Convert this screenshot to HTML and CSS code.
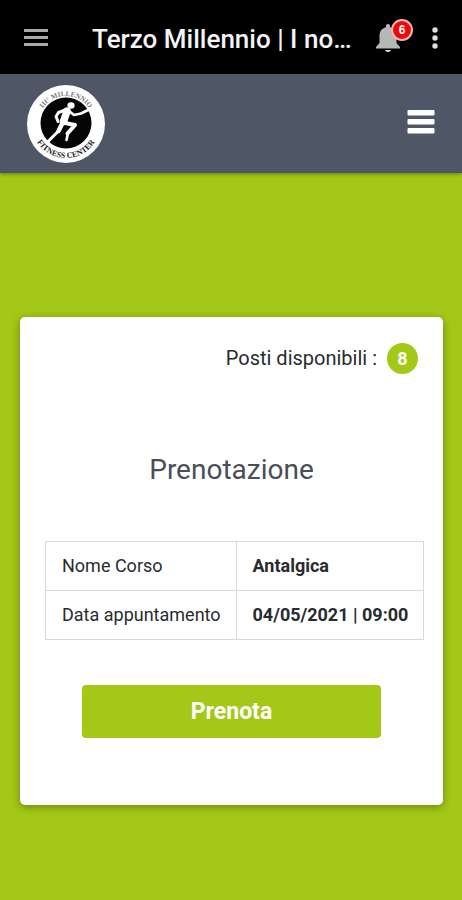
FILE: index.html
```html
<!DOCTYPE html>
<html lang="it">
<head>
<meta charset="utf-8">
<meta name="viewport" content="width=device-width, initial-scale=1">
<title>Terzo Millennio</title>
<link rel="stylesheet" href="styles.css">
</head>
<body>
<header class="appbar">
  <button class="icon-button" type="button" aria-label="Menu">
    <svg width="24" height="18" viewBox="0 0 24 18" fill="#aaa"><path d="M0 0h24v3H0zM0 7h24v3H0zM0 14h24v3H0z"/></svg>
  </button>
  <h1 class="appbar-title">Terzo Millennio | I no…</h1>
  <button class="icon-button bell" type="button" aria-label="Notifiche">
    <svg width="24" height="28" viewBox="0 0 24 28" fill="#b5b8b8"><path d="M12 0c1.300 0 2 .9 2 2v1.200c4.200 1 6.500 4.400 6.500 8.800v7L24 23v1.500H0V23l3.500-4v-7c0-4.400 2.300-7.800 6.500-8.800V2c0-1.100.7-2 2-2z"/><path d="M9 26h6c-.4 1.300-1.500 2-3 2s-2.600-.7-3-2z" fill="#ddd"/></svg>
    <span class="bell-count">6</span>
  </button>
  <button class="icon-button" type="button" aria-label="Altro">
    <svg width="6" height="22" viewBox="0 0 6 22" fill="#ddd"><circle cx="3" cy="3" r="2.700"/><circle cx="3" cy="11" r="2.700"/><circle cx="3" cy="19" r="2.700"/></svg>
  </button>
</header>
<nav class="navbar">
  <a class="brand" href="#" aria-label="III° Millennio Fitness Center">
    <svg width="78" height="78" viewBox="0 0 78 78">
      <defs>
        <path id="arc-top" d="M11 39a28 28 0 0 1 56 0"/>
        <path id="arc-bottom" d="M5 39a34 34 0 0 0 68 0"/>
      </defs>
      <circle cx="39" cy="39" r="39" fill="#fff"/>
      <circle cx="39" cy="38" r="25.500" fill="#050505"/>
      <text class="logo-top"><textPath href="#arc-top" startOffset="50%" text-anchor="middle">III° MILLENNIO</textPath></text>
      <text class="logo-bottom"><textPath href="#arc-bottom" startOffset="50%" text-anchor="middle">FITNESS CENTER</textPath></text>
      <g fill="none" stroke="#fff" stroke-linecap="round" stroke-linejoin="round">
        <path d="M38 25l-6.500 2.500-2.500 4 2 5" stroke-width="3"/>
        <path d="M42 26l5 4 7-1.500 9-4.500" stroke-width="2.800"/>
        <path d="M40 26l-3.500 10.500" stroke-width="7.500"/>
        <path d="M38 38l10 2-7.500 8.500" stroke-width="4"/>
        <path d="M41 48l-1.500 7" stroke-width="2.600"/>
        <path d="M35.500 38l-4 8" stroke-width="4.500"/>
        <path d="M31.500 46l-9.500 9.500-1.500 2" stroke-width="3"/>
      </g>
      <ellipse cx="44" cy="20.500" rx="3.600" ry="3.200" fill="#fff"/>
    </svg>
  </a>
  <button class="icon-button" type="button" aria-label="Apri navigazione">
    <svg width="28" height="24" viewBox="0 0 28 24" fill="#fff"><rect x=".5" width="27" height="5.500" rx="1"/><rect x=".5" y="9" width="27" height="5.500" rx="1"/><rect x=".5" y="18" width="27" height="5.500" rx="1"/></svg>
  </button>
</nav>
<main class="page">
  <section class="card">
    <p class="seats">Posti disponibili : <span class="seats-count">8</span></p>
    <h2 class="card-title">Prenotazione</h2>
    <table class="details">
      <tr><th scope="row">Nome Corso</th><td>Antalgica</td></tr>
      <tr><th scope="row">Data appuntamento</th><td>04/05/2021 | 09:00</td></tr>
    </table>
    <button class="book" type="button">Prenota</button>
  </section>
</main>
</body>
</html>
```
FILE: styles.css
```css
* {
  box-sizing: border-box;
}

body {
  margin: 0;
  min-height: 100vh;
  background: #a4c817;
  color: #292b2e;
  font-family: Roboto, "Liberation Sans", sans-serif;
}

svg {
  display: block;
}

.icon-button {
  flex: none;
  padding: 0;
  border: 0;
  background: none;
}

.appbar {
  display: flex;
  align-items: center;
  height: 74px;
  padding: 2px 24px 0;
  background: #000;
}

.appbar-title {
  flex: 1;
  min-width: 0;
  margin: 0 12px 0 44px;
  padding-top: 2px;
  overflow: hidden;
  color: #f4f4f4;
  font-size: 26px;
  font-weight: 500;
  line-height: 32px;
  text-overflow: ellipsis;
  white-space: nowrap;
}

.bell {
  position: relative;
  margin-right: 32px;
}

.bell-count {
  position: absolute;
  top: -5px;
  left: 15px;
  width: 22px;
  height: 22px;
  border: 2px solid #eab5b5;
  border-radius: 50%;
  background: #f00808;
  color: #fff;
  font-size: 12px;
  font-weight: 700;
  line-height: 18px;
  text-align: center;
}

.navbar {
  display: flex;
  align-items: center;
  justify-content: space-between;
  height: 99px;
  padding: 0 27px;
  background: #4f5766;
  box-shadow: 0 1px 4px rgba(0, 0, 0, 0.4);
}

.navbar .icon-button {
  padding-bottom: 4px;
}

.logo-top,
.logo-bottom {
  font-family: "Liberation Serif", serif;
  font-weight: 700;
}

.logo-top {
  fill: #777;
  font-size: 7px;
}

.logo-bottom {
  fill: #222;
  font-size: 8px;
}

.page {
  padding: 144px 19px 40px 20px;
}

.card {
  padding: 25px 25px 67px;
  border-radius: 5px;
  background: #fff;
  box-shadow: 0 2px 8px rgba(0, 0, 0, 0.35);
}

.seats {
  display: flex;
  align-items: center;
  justify-content: flex-end;
  gap: 10px;
  margin: 0;
  font-size: 20px;
  line-height: 32px;
}

.seats-count {
  width: 31px;
  height: 31px;
  border-radius: 50%;
  background: #a4c817;
  color: #fff;
  font-size: 18px;
  font-weight: 700;
  line-height: 31px;
  text-align: center;
}

.card-title {
  margin: 76px 0 51px;
  color: #4a4e59;
  font-size: 28px;
  font-weight: 400;
  line-height: 40px;
  text-align: center;
}

.details {
  width: 100%;
  border-collapse: collapse;
  font-size: 18px;
  line-height: 24px;
}

.details th,
.details td {
  padding: 12px 15px 12px 16px;
  border: 1px solid #d9d9d9;
  text-align: left;
  white-space: nowrap;
}

.details th {
  font-weight: 400;
}

.details td {
  font-weight: 700;
}

.book {
  display: block;
  width: 80%;
  height: 53px;
  margin: 45px auto 0;
  padding: 0;
  border: 0;
  border-radius: 4px;
  background: #a4c817;
  color: #fff;
  font-family: inherit;
  font-size: 23px;
  font-weight: 700;
}
```
